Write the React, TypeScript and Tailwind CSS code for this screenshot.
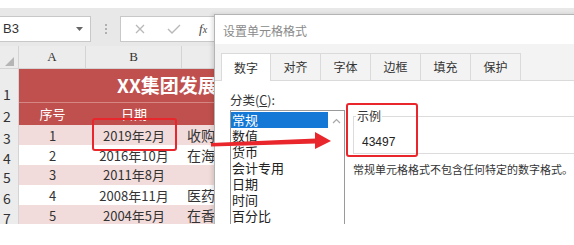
import React from 'react';

const cjk = "font-['Noto_Sans_CJK_SC','Noto_Sans',sans-serif]";

const rows = [
  { n: '3', a: '1', b: '2019年2月', c: '收购', pink: true },
  { n: '4', a: '2', b: '2016年10月', c: '在海', pink: false },
  { n: '5', a: '3', b: '2011年8月', c: '', pink: true },
  { n: '6', a: '4', b: '2008年11月', c: '医药', pink: false },
  { n: '7', a: '5', b: '2004年5月', c: '在香', pink: true },
];

const tabs = ['数字', '对齐', '字体', '边框', '填充', '保护'];
const categories = ['常规', '数值', '货币', '会计专用', '日期', '时间', '百分比'];

// ─── Formula bar ──────────────────────────────────────────────────────────────
function FormulaBar() {
  return (
    <div className="h-[38px] flex items-start pt-[8px] bg-[#e8e8e8]">
      <div className="w-[91px] h-[26px] bg-white border border-l-0 border-[#c8c8c8] flex items-center justify-between pl-[3px] pr-[7px]">
        <span className="text-[13px] text-[#333] font-['Liberation_Sans',sans-serif]">B3</span>
        <svg width="7" height="4" viewBox="0 0 7 4"><path d="M0 0 L7 0 L3.5 4 Z" fill="#666" /></svg>
      </div>
      <div className="w-[29px] h-[26px] flex flex-col items-center justify-center gap-[2px]">
        <span className="w-[2px] h-[2px] bg-[#b0b0b0]" />
        <span className="w-[2px] h-[2px] bg-[#b0b0b0]" />
        <span className="w-[2px] h-[2px] bg-[#b0b0b0]" />
      </div>
      <div className="flex-1 h-[26px] bg-white border border-[#c8c8c8] flex items-center pl-[13px]">
        <svg width="12" height="12" viewBox="0 0 12 12"><path d="M2 2 L10 10 M10 2 L2 10" stroke="#b8b8b8" strokeWidth="1.3" /></svg>
        <svg width="14" height="12" viewBox="0 0 14 12" className="ml-[21px]"><path d="M1 6 L5 10 L13 2" stroke="#b8b8b8" strokeWidth="1.4" fill="none" /></svg>
        <span className="ml-[18px] text-[13px] italic text-[#444] font-['Liberation_Serif',serif]">f<span className="text-[10px]">x</span></span>
      </div>
    </div>
  );
}

// ─── Sheet grid ───────────────────────────────────────────────────────────────
function Sheet() {
  return (
    <div className={`flex flex-col ${cjk}`}>
      <div className="h-[23px] grid grid-cols-[19px_67px_96px_1fr] bg-[#ececec] border-b border-[#d4d4d4]">
        <div className="flex items-end justify-end pb-[2px] pr-[4px] border-r border-[#d4d4d4]">
          <svg width="9" height="9" viewBox="0 0 9 9"><path d="M9 0 L9 9 L0 9 Z" fill="#b5b5b5" /></svg>
        </div>
        <div className="flex items-center justify-center border-r border-[#d4d4d4] text-[13px] text-[#333] font-['Liberation_Serif',serif]">A</div>
        <div className="flex items-center justify-center border-r border-[#d4d4d4] text-[13px] text-[#333] font-['Liberation_Serif',serif]">B</div>
        <div />
      </div>

      <div className="h-[34px] grid grid-cols-[19px_1fr]">
        <div className="bg-[#ececec] border-r border-[#d4d4d4] flex items-end pl-[3px] text-[14px] text-[#333] leading-none pb-[2px]">1</div>
        <div className="bg-[#c0504d] flex items-center pl-[98px] text-[19px] font-bold text-white border-b border-[#d48784]">XX集团发展</div>
      </div>

      <div className="h-[22px] grid grid-cols-[19px_67px_96px_1fr]">
        <div className="bg-[#ececec] border-r border-[#d4d4d4] flex items-end pl-[3px] text-[14px] text-[#333] leading-none pb-[2px]">2</div>
        <div className="bg-[#c0504d] flex items-center justify-center text-[13px] text-white">序号</div>
        <div className="bg-[#c0504d] flex items-center justify-center text-[13px] text-white">日期</div>
        <div className="bg-[#c0504d]" />
      </div>

      {rows.map(r => (
        <div key={r.n} className="h-[20px] grid grid-cols-[19px_67px_96px_1fr]">
          <div className="bg-[#ececec] border-r border-b border-[#d4d4d4] flex items-end pl-[3px] text-[14px] text-[#333] leading-none pb-[1px]">{r.n}</div>
          <div className={`${r.pink ? 'bg-[#f2dcdb]' : 'bg-white'} border-b border-[#e6b8b7] flex items-center justify-center text-[13px] text-[#333]`}>{r.a}</div>
          <div className={`${r.pink ? 'bg-[#f2dcdb]' : 'bg-white'} border-b border-[#e6b8b7] flex items-center justify-center text-[13px] text-[#333]`}>{r.b}</div>
          <div className={`${r.pink ? 'bg-[#f2dcdb]' : 'bg-white'} border-b border-[#e6b8b7] flex items-center pl-[5px] text-[14px] text-[#333]`}>{r.c}</div>
        </div>
      ))}
    </div>
  );
}

// ─── Format Cells dialog ──────────────────────────────────────────────────────
function FormatDialog() {
  return (
    <div className={`absolute left-[214px] top-[6px] w-[380px] h-[230px] bg-white border-l border-t border-[#b4b4b4] shadow-[-2px_0_4px_rgba(0,0,0,0.12)] flex flex-col ${cjk}`}>
      <div className="h-[29px] flex items-center pl-[8px] pt-[3px] text-[12px] text-[#8a8a8a]">设置单元格格式</div>
      <div className="h-[37px] bg-[#f3f3f3] flex items-end pl-[6px] border-b border-[#dadada]">
        {tabs.map((t, i) => (
          <div key={t}
            className={`w-[50px] h-[27px] flex items-center justify-center text-[12px] text-[#333] border-t border-r border-[#dadada] ${i === 0 ? 'bg-white border-l -mb-px h-[28px]' : ''}`}>
            {t}
          </div>
        ))}
      </div>
      <div className="flex-1 flex pl-[15px] pt-[10px]">
        <div className="flex flex-col">
          <div className="text-[12.5px] text-[#333] h-[18px] leading-[18px]">分类(<span className="underline">C</span>):</div>
          <div className="mt-[1px] w-[115px] flex-1 border border-[#9a9a9a] flex">
            <div className="flex-1 flex flex-col pt-px font-['Liberation_Sans','Noto_Sans_CJK_SC',sans-serif]">
              {categories.map((c, i) => (
                <div key={c}
                  className={`h-[16px] flex items-center leading-none text-[13px] pl-[1px] ${i === 0 ? 'bg-[#1479d6] text-white' : 'text-[#222]'}`}>
                  {c}
                </div>
              ))}
            </div>
            <div className="w-[16px] flex justify-center pt-[7px] bg-white">
              <svg width="9" height="6" viewBox="0 0 9 6"><path d="M1 5 L4.5 1.5 L8 5" stroke="#a8a8a8" strokeWidth="1.2" fill="none" /></svg>
            </div>
          </div>
        </div>
        <div className="flex flex-col ml-[8px] pt-[25px] flex-1">
          <div className="relative h-[38px] border border-[#dcdcdc] border-r-0">
            <span className="absolute -top-[9px] left-[2px] bg-white px-px text-[12px] text-[#333] leading-[16px]">示例</span>
            <div className="pt-[16px] pl-[8px] text-[12px] text-[#222] font-['Liberation_Sans',sans-serif]">43497</div>
          </div>
          <div className="mt-[7px] text-[11px] text-[#333] whitespace-nowrap">常规单元格格式不包含任何特定的数字格式。</div>
        </div>
      </div>
    </div>
  );
}

export default function App() {
  return (
    <div className="w-[574px] h-[245px] bg-white overflow-hidden">
      <div className="relative mt-[8px] h-[216px] overflow-hidden bg-[#e8e8e8]">
        <FormulaBar />
        <Sheet />
        <FormatDialog />

        {/* annotations */}
        <div className="absolute left-[92px] top-[110px] w-[85px] h-[33px] border-2 border-[#e8262b] rounded-[3px]" />
        <div className="absolute left-[346px] top-[95px] w-[72px] h-[54px] border-2 border-[#e8262b] rounded-[3px]" />
        <svg className="absolute left-0 top-0" width="574" height="216" viewBox="0 0 574 216">
          <path d="M211 135 L316 130.5 L316 135.5 L211 138.5 Z" fill="#e8262b" />
          <path d="M315 124 L331 133 L315 141 Z" fill="#e8262b" />
        </svg>
      </div>
    </div>
  );
}
